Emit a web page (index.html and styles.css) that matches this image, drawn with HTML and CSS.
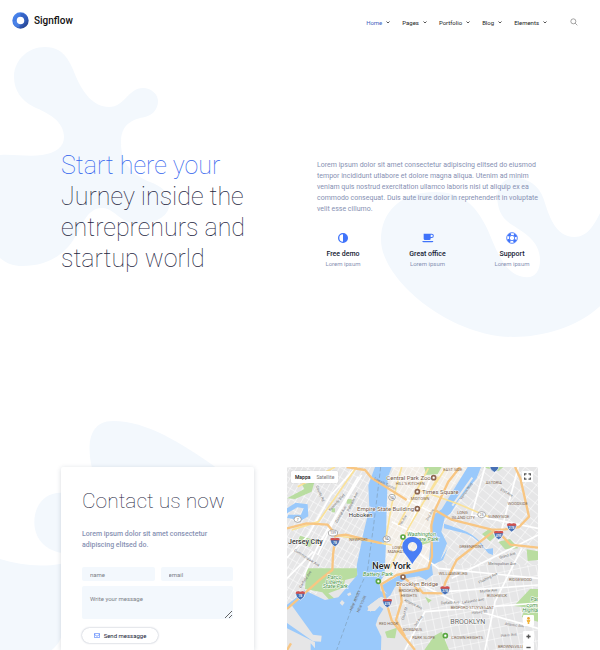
FILE: index.html
```html
<!DOCTYPE html>
<html lang="en">
<head>
<meta charset="utf-8">
<meta name="viewport" content="width=device-width, initial-scale=1">
<title>Signflow</title>
<link rel="stylesheet" href="styles.css">
</head>
<body>
<header class="header">
  <a class="brand" href="#">
    <svg class="brand-mark" viewBox="0 0 54 54" aria-hidden="true">
      <defs><linearGradient id="ring" x1="0" y1="0" x2="1" y2="1"><stop offset="0" stop-color="#4a86ee"/><stop offset=".5" stop-color="#3c70d8"/><stop offset="1" stop-color="#24418c"/></linearGradient></defs>
      <circle cx="27" cy="27" r="19" fill="none" stroke="url(#ring)" stroke-width="14"/>
      <path d="M27 3a24 24 0 0 1 23 18L39 26A12 12 0 0 0 27 15Z" fill="#3159b5" opacity=".6"/>
      <path d="M4 30a23 23 0 0 0 19 20l2-11a12 12 0 0 1-10-11Z" fill="#5b97f8" opacity=".45"/>
    </svg>
    Signflow
  </a>
  <nav class="nav">
    <a class="nav-link active" href="#">Home <svg class="chevron" viewBox="0 0 8 6"><path d="M1 1l3 3 3-3"/></svg></a>
    <a class="nav-link" href="#">Pages <svg class="chevron" viewBox="0 0 8 6"><path d="M1 1l3 3 3-3"/></svg></a>
    <a class="nav-link" href="#">Portfolio <svg class="chevron" viewBox="0 0 8 6"><path d="M1 1l3 3 3-3"/></svg></a>
    <a class="nav-link" href="#">Blog <svg class="chevron" viewBox="0 0 8 6"><path d="M1 1l3 3 3-3"/></svg></a>
    <a class="nav-link" href="#">Elements <svg class="chevron" viewBox="0 0 8 6"><path d="M1 1l3 3 3-3"/></svg></a>
    <button class="search" type="button" aria-label="Search"><svg viewBox="0 0 24 24"><circle cx="10" cy="10" r="7.500"/><path d="M15.500 15.500L22 22"/></svg></button>
  </nav>
</header>

<main>
  <section class="hero">
    <svg class="blob blob-left" viewBox="0 40 180 230" aria-hidden="true"><path d="M45 47C28 47 14 60 14 77C14 91 22 101 34 107C48 113 64 121 64 137C64 147 56 153 42 155C28 157 14 154 0 155V258C7 264 14 266 22 266C40 266 55 261 68 247C81 233 84 207 103 208C116 209 121 225 140 224C158 223 170 214 169 204C169 192 161 186 150 182C133 175 120 164 121 140C122 123 134 119 145 117C153 115 158 109 158 101C158 94 151 88 143 88C128 88 125 107 109 107C93 107 83 92 77 79C71 65 66 47 45 47Z"/></svg>
    <svg class="blob blob-right" viewBox="240 100 660 500" aria-hidden="true"><path d="M405 157C482 157 525 190 563 270C588 326 614 413 681 413C707 413 720 392 720 362C720 300 665 275 632 253C600 231 591 200 592 168C594 135 614 115 645 115C682 115 717 136 731 178C746 224 764 292 824 292C862 292 884 254 900 220V500C830 564 730 592 640 592C450 592 243 420 243 300C243 215 304 157 405 157Z"/></svg>
    <h1 class="hero-title"><span class="accent">Start here your</span> Jurney inside the entreprenurs and startup world</h1>
    <div class="hero-body">
      <p class="text">Lorem ipsum dolor sit amet consectetur adipiscing elitsed do eiusmod tempor incididunt utlabore et dolore magna aliqua. Utenim ad minim veniam quis nostrud exercitation ullamco laboris nisi ut aliquip ex ea commodo consequat. Duis aute irure dolor in reprehenderit in voluptate velit esse cillumo.</p>
      <ul class="features">
        <li class="feature">
          <svg class="feature-icon" viewBox="0 0 36 36"><circle cx="18" cy="18" r="13" fill="none" stroke="#3f73fa" stroke-width="4"/><path d="M18 5a13 13 0 0 1 0 26Z" fill="#3f73fa"/></svg>
          <h2 class="feature-title">Free demo</h2><p class="feature-note">Lorem ipsum</p>
        </li>
        <li class="feature">
          <svg class="feature-icon" viewBox="0 0 36 36"><path fill="#3f73fa" fill-rule="evenodd" d="M5 5H29a6 6 0 0 1 0 13H26v2a4 4 0 0 1-4 4H9a4 4 0 0 1-4-4ZM26 8v7h3a3 3 0 0 0 0-7ZM1 27H34q0 4-4 4H5q-4 0-4-4Z"/></svg>
          <h2 class="feature-title">Great office</h2><p class="feature-note">Lorem ipsum</p>
        </li>
        <li class="feature">
          <svg class="feature-icon" viewBox="0 0 36 36"><g fill="none" stroke="#3f73fa"><circle cx="18" cy="18" r="16" stroke-width="2.500"/><circle cx="18" cy="18" r="8" stroke-width="2.500"/><circle cx="18" cy="18" r="12" stroke-width="7" stroke-dasharray="9.400 9.450" stroke-dashoffset="-4.700"/></g></svg>
          <h2 class="feature-title">Support</h2><p class="feature-note">Lorem ipsum</p>
        </li>
      </ul>
    </div>
  </section>

  <section class="contact">
    <svg class="blob blob-contact" viewBox="0 30 660 690" aria-hidden="true"><path d="M275 170C263 115 260 33 340 33C440 33 545 100 645 170V250H290ZM185 248C140 246 103 280 103 337C103 385 137 428 200 430V250ZM0 447C60 465 120 473 185 461V675Q180 700 155 720H0Z"/></svg>
    <form class="card">
      <h2 class="card-title">Contact us now</h2>
      <p class="text card-text">Lorem ipsum dolor sit amet consectetur adipiscing elitsed do.</p>
      <div class="fields">
        <input class="field" type="text" placeholder="name" aria-label="name">
        <input class="field" type="email" placeholder="email" aria-label="email">
        <textarea class="field message" placeholder="Write your message" aria-label="Write your message"></textarea>
      </div>
      <button class="send" type="button"><svg viewBox="0 0 18 15"><rect x="1" y="1" width="16" height="13" rx="1"/><path d="M1 4l8 6 8-6"/></svg>Send messagge</button>
    </form>

    <div class="map">
      <svg class="map-canvas" viewBox="6 6 753 549" preserveAspectRatio="xMidYMin slice" role="img" aria-label="Map of New York">
        <defs>
          <pattern id="grid-a" width="16" height="26" patternUnits="userSpaceOnUse" patternTransform="rotate(30)"><path d="M0 0H16M0 0V26" stroke="#fff" stroke-width="3" fill="none"/></pattern>
          <pattern id="grid-b" width="24" height="32" patternUnits="userSpaceOnUse" patternTransform="rotate(-12)"><path d="M0 0H24M0 0V32" stroke="#fff" stroke-width="3" fill="none"/></pattern>
          <pattern id="grid-c" width="30" height="22" patternUnits="userSpaceOnUse" patternTransform="rotate(38)"><path d="M0 0H30M0 0V22" stroke="#fff" stroke-width="3" fill="none"/></pattern>
          <g id="shield"><path d="M-13-11Q-6-14 0-11Q6-14 13-11Q17 5 0 14Q-17 5-13-11Z" fill="#4670b5" stroke="#fff" stroke-width="2"/><path d="M-13-11Q-6-13 0-11Q6-13 13-11L14-5H-14Z" fill="#d5504b"/></g>
        </defs>
        <path fill="#e6e6e7" d="M0 0H770V560H0Z"/>
        <path fill="url(#grid-a)" d="M0 0H262L220 315L0 440Z"/>
        <path fill="#f3eee7" d="M325 0H560L450 130L435 300L290 355L302 130Z"/>
        <path fill="url(#grid-a)" d="M315 0H560L450 130L435 300L290 355L302 130Z"/>
        <path fill="url(#grid-c)" d="M555 0H770V300H440L480 160Z"/>
        <path fill="url(#grid-b)" d="M440 300H770V560H380L290 400Z"/>
        <g fill="#b9dda0">
          <path d="M417 6H470L458 27L424 30ZM593 6H655L641 18L605 10ZM6 100L58 72L50 58L88 52L80 80L30 102ZM45 212L88 225L74 246L38 230ZM65 310H217L216 336L180 345L175 368L130 385L150 402L134 406L112 382L60 372ZM591 207L615 190L630 215L615 229ZM640 230L675 222L700 250L660 253ZM725 253L759 259V285L728 288ZM687 423L735 372H759V470L710 456L722 427ZM448 512L470 500L492 555H418ZM300 500L336 488L330 520L306 518ZM420 395L440 406L430 414Z"/>
          <path d="M140 130h10v12h-10ZM185 102h15v14h-15ZM395 228L455 204L466 223L410 240Z"/>
        </g>
        <g fill="#9ac9fb">
          <path d="M270 6H320L308 40L305 130L303 235L299 330L283 352L287 378L315 391L304 402L288 395L254 420L247 438L270 438L284 423L295 432L279 458L272 480L289 515L288 555H77V535L90 550V532L6 490V419L36 396L58 376L120 405L160 397L217 330L215 302L234 210L253 130L250 60Z"/>
          <path d="M287 363L350 326L430 312L444 150L470 133L548 6H588L575 40L519 108L497 145L479 158L469 200L486 235L466 285L488 250L474 285L440 301L444 329L423 345L402 334L366 339L330 365L315 393L304 385Z"/>
          <path d="M477 176Q500 183 533 195Q565 207 588 234L601 253L624 250V270L610 265L592 244Q566 207 520 200L477 190Z"/>
          <path d="M6 130L32 113L68 118L70 154L50 166L6 159L10 149H48L56 130L37 127L6 145Z"/>
        </g>
        <path fill="#e6e6e7" d="M20 421L84 509L110 512L108 530L84 529L6 474V430ZM247 425L282 399L292 412L256 440ZM171 405l8 8-7 9-8-8ZM186 387l10-5 3 7-9 4Z"/>
        <path d="M502 122L562 38" stroke="#ecebea" stroke-width="6" fill="none"/>
        <path d="M287 6L266 180L247 320L215 388L155 555" fill="none" stroke="#7f9fba" stroke-width="2" stroke-dasharray="13 7"/>
        <g fill="none" stroke="#fff" stroke-width="5">
          <path d="M6 278L70 210L138 90L210 10M55 335L100 240L220 35M6 340L85 260M98 270L150 160L230 30M345 250L440 30M320 170L430 225M320 80L440 142M402 265L460 310L759 340M390 350L550 430L759 490M360 555L420 440L759 414M480 380L759 360M500 340L759 210M600 6L560 150L759 190M640 230L700 6M710 250L630 410L600 555"/>
        </g>
        <g fill="none" stroke="#fae29a" stroke-width="5">
          <path d="M20 195L100 170L215 6M38 65L150 6M165 213L320 240M402 75L520 117L610 155M299 240L320 120L350 6M340 180L430 10M315 310L370 190L460 35M410 120L480 12"/>
        </g>
        <g fill="none" stroke="#f8c683" stroke-width="7" stroke-linejoin="round">
          <path d="M6 190L65 175L128 179L152 209L144 270L142 315L105 344L6 432M152 213L182 209L290 235M185 6L240 15L260 39L365 105M285 360L335 330L430 310L441 274L439 180L450 135L500 164L620 194L660 193L702 186L732 155L706 40L690 6M450 135L490 50L525 6M289 360L320 466L349 504L390 555M402 370L414 384L470 385L482 350L515 285L605 215L630 196M360 340L405 380M640 200L676 239L759 248M343 350L350 410L333 465L360 515"/>
          <path d="M6 555L18 535"/>
        </g>
        <g class="label-area"><text x="475" y="17">EAST SIDE</text><text x="332" y="61">HILL’S KITCHEN</text><text x="377" y="105">MIDTOWN</text><text x="602" y="57">ASTORIA</text><text x="668" y="121">WOODSIDE</text><text x="517" y="148">LONG</text><text x="500" y="161">ISLAND CITY</text><text x="609" y="159">SUNNYSIDE</text><text x="193" y="228">NEWPORT</text><text x="322" y="251">LOWER</text><text x="308" y="264">MANHATTAN</text><text x="523" y="249">GREENPOINT</text><text x="461" y="330">WILLIAMSBURG</text><text x="672" y="348">RIDGEWOOD</text><text x="341" y="382">BROOKLYN</text><text x="347" y="395">HEIGHTS</text><text x="606" y="396">BUSHWICK</text><text x="497" y="431">BEDFORD-STUYVESANT</text><text x="282" y="479">RED HOOK</text><text x="353" y="497">GOWANUS</text><text x="382" y="523">PARK SLOPE</text><text x="499" y="523">CROWN HEIGHTS</text><text x="639" y="548">BROWNSVILLE</text></g>
        <g class="label-road"><text transform="translate(267 43) rotate(27)">Lincoln Tunnel</text><text transform="translate(92 64) rotate(66)">County Rd</text><text transform="translate(136 139) rotate(-48)">Kennedy Blvd</text><text transform="translate(157 174) rotate(-60)">Central Ave</text><text transform="translate(192 140) rotate(-64)">Palisade Ave</text><text transform="translate(348 184) rotate(-60)">7th Ave</text><text transform="translate(428 168) rotate(-60)">2nd Ave</text><text transform="translate(530 105) rotate(-55)">Vernon Blvd</text><text transform="translate(644 75) rotate(29)">31st Ave</text><text transform="translate(644 281) rotate(-15)">Grand Ave</text><text transform="translate(610 301)">Metropolitan Ave</text><text transform="translate(583 356) rotate(-27)">Flushing Ave</text><text transform="translate(585 383) rotate(-5)">Myrtle Ave</text><text transform="translate(468 418) rotate(-3)">DeKalb Ave</text><text transform="translate(532 416) rotate(-9)">Lafayette Ave</text><text transform="translate(560 447) rotate(-6)">Halsey St</text><text transform="translate(659 480) rotate(7)">Atlantic Ave</text><text transform="translate(357 408) rotate(26)">Atlantic Ave</text><text transform="translate(356 466) rotate(-73)">Court St</text><text transform="translate(393 485) rotate(-55)">3rd Ave</text><text transform="translate(26 258) rotate(32)">Communipaw Ave</text><text transform="translate(48 370) rotate(-57)">Garfield Ave</text><text transform="translate(201 437) rotate(-66)">NEW JERSEY</text><text transform="translate(222 443) rotate(-66)">NEW YORK</text><text transform="translate(648 517) rotate(-7)">Pitkin Ave</text></g>
        <g class="label-poi"><text x="304" y="44">Central Park Zoo</text><text x="411" y="86">Times Square</text><text x="216" y="137">Empire State Building</text><text x="334" y="362">Brooklyn Bridge</text></g>
        <g class="label-park"><text x="366" y="213">Washington</text><text x="372" y="229">Square Park</text><text x="234" y="334">Battery Park</text><text x="127" y="341">Parco</text><text x="122" y="356">Liberty</text><text x="113" y="370">State Park</text><text x="737" y="407">Parco</text><text x="724" y="425">comm.</text><text x="712" y="441">Highland</text></g>
        <g class="label-town"><text x="191" y="157">Hoboken</text><text x="496" y="476" class="borough">BROOKLYN</text><text x="9" y="236" class="city">Jersey City</text><text x="262" y="311" class="metro">New York</text></g>
        <g fill="#fff" stroke="#8d6651" stroke-width="5"><circle cx="446" cy="38" r="6"/><circle cx="397" cy="80" r="6"/><circle cx="397" cy="131" r="6"/><circle cx="354" cy="336" r="6"/></g>
        <g fill="#fff" stroke="#5aa742" stroke-width="5"><circle cx="354" cy="216" r="6"/><circle cx="280" cy="349" r="6"/><circle cx="481" cy="512" r="6"/></g>
        <g class="route"><ellipse cx="321" cy="97" rx="10" ry="9"/><ellipse cx="305" cy="222" rx="11" ry="9"/><ellipse cx="38" cy="163" rx="11" ry="9"/><ellipse cx="144" cy="204" rx="14" ry="9"/><ellipse cx="590" cy="149" rx="12" ry="9"/><text x="321" y="101">9A</text><text x="305" y="226">9A</text><text x="38" y="167">7</text><text x="144" y="208">139</text><text x="590" y="153">25</text></g>
        <use href="#shield" x="150" y="231"/><use href="#shield" x="46" y="391"/><use href="#shield" x="307" y="414"/><use href="#shield" x="480" y="376"/><use href="#shield" x="641" y="210"/><use href="#shield" x="680" y="187"/><use href="#shield" x="628" y="8"/>
        <g class="shield-text"><text x="150" y="236">78</text><text x="46" y="396">78</text><text x="307" y="419">478</text><text x="480" y="381">278</text><text x="641" y="215">495</text><text x="680" y="192">278</text></g>
        <path fill="#4a7ef5" fill-rule="evenodd" d="M382 297C368 273 352 264 352 244A30 29 0 0 1 412 244C412 264 395 275 382 297ZM382 231a14 14 0 1 0 1 0Z"/>
      </svg>
      <div class="map-types"><button class="map-type selected" type="button">Mappa</button><button class="map-type" type="button">Satellite</button></div>
      <button class="map-button fullscreen" type="button" aria-label="Fullscreen"><svg viewBox="0 0 22 20"><path d="M2 7V2H8M14 2H20V7M20 13V18H14M8 18H2V13" fill="none" stroke="#555" stroke-width="4"/></svg></button>
      <div class="map-tools">
        <button class="map-button" type="button" aria-label="Street view"><svg viewBox="0 0 22 26"><circle cx="11" cy="5" r="5" fill="#e8a32d"/><path d="M4 10H18L16 19H14V26H8V19H6Z" fill="#f3b53c"/></svg></button>
        <div class="zoom"><button class="map-button" type="button" aria-label="Zoom in"><svg viewBox="0 0 20 20"><path d="M4 10H16M10 4V16" stroke="#555" stroke-width="4"/></svg></button><button class="map-button" type="button" aria-label="Zoom out"><svg viewBox="0 0 20 20"><path d="M4 10H16" stroke="#555" stroke-width="4"/></svg></button></div>
      </div>
    </div>
  </section>
</main>
</body>
</html>
```
FILE: styles.css
```css
* { box-sizing: border-box; }
body { margin: 0; background: #fff; color: #151b33; font-family: Roboto, "Liberation Sans", sans-serif; font-size: 7px; }
h1, h2, p, ul { margin: 0; padding: 0; }
button { border: 0; padding: 0; background: none; font: inherit; color: inherit; cursor: pointer; }
a { color: inherit; text-decoration: none; }
svg { display: block; }

.header { display: flex; align-items: center; justify-content: space-between; height: 40px; padding: 0 22px 0 12px; position: relative; z-index: 1; }
.brand { display: flex; align-items: center; gap: 5px; font-size: 10px; font-weight: 500; color: #111; }
.brand-mark { width: 17px; height: 17px; }
.nav { display: flex; align-items: center; gap: 12px; padding-top: 4px; font-size: 6px; color: #222; }
.nav-link { display: flex; align-items: center; gap: 4px; }
.active { color: #3f5fc0; }
.chevron { width: 4px; height: 3px; fill: none; stroke: #555; stroke-width: 2; }
.search { margin-left: 11px; }
.search svg { width: 8px; height: 8px; fill: none; stroke: #777; stroke-width: 2; }

.blob { position: absolute; z-index: -1; fill: #f3f8fd; }
.blob-left { left: 0; top: 0; width: 180px; }
.blob-right { right: 0; top: 133px; width: 220px; }
.blob-contact { left: 0; top: 0; width: 220px; }

.hero { position: relative; display: grid; grid-template-columns: 193fr 221fr; gap: 63px; align-items: start; min-height: 380px; padding: 110px 62px 0 61px; }
.hero-title { font-size: 25px; line-height: 31px; font-weight: 100; color: #1d2440; }
.accent { display: block; color: #3264ee; }
.hero-body { padding-top: 10px; }
.text { color: #8791b3; font-size: 7px; line-height: 11px; }
.features { display: grid; grid-template-columns: repeat(3, 52px); justify-content: space-between; list-style: none; padding-top: 17px; }
.feature { text-align: center; white-space: nowrap; }
.feature-icon { width: 12px; height: 12px; margin: 0 auto 6px; }
.feature-title { font-size: 7px; line-height: 9px; font-weight: 500; }
.feature-note { font-size: 6px; line-height: 10px; color: #8791b3; }

.contact { position: relative; display: grid; grid-template-columns: 193fr 251fr; gap: 33px; min-height: 230px; padding: 47px 62px 0 61px; overflow: hidden; }
.card { padding: 20px 21px 7px; background: #fff; border-radius: 2px 2px 0 0; box-shadow: 0 1px 5px rgba(30, 50, 80, .18); }
.card-title { font-size: 21px; line-height: 28px; font-weight: 100; color: #1d2440; }
.card-text { padding-top: 14px; font-weight: 500; }
.fields { display: grid; grid-template-columns: 1fr 1fr; gap: 5px 6px; padding: 16px 0 9px; }
.field { width: 100%; min-width: 0; height: 14px; padding: 0 8px; border: 0; border-radius: 2px; background: #f3f8fd; font: inherit; font-size: 6px; color: #333; }
.field::placeholder { color: #7c8086; opacity: 1; }
.message { grid-column: 1 / -1; height: 33px; padding-top: 9px; display: block; }
.send { display: flex; align-items: center; justify-content: center; gap: 4px; width: 76px; height: 15px; border-radius: 8px; background: #fff; box-shadow: 0 0 2px rgba(20, 40, 80, .4); font-size: 6px; }
.send svg { width: 6px; height: 5px; fill: none; stroke: #3f73fa; stroke-width: 2; }

.map { position: relative; overflow: hidden; border-radius: 2px 2px 0 0; background: #e6e6e7; }
.map-canvas { position: absolute; inset: 0; width: 100%; height: 100%; }
.map-types { position: absolute; left: 4px; top: 4px; display: flex; gap: 6px; height: 12px; padding: 0 4px; background: #fff; border-radius: 1px; box-shadow: 0 0 1px rgba(0, 0, 0, .3); font-size: 5px; color: #777; }
.selected { color: #111; font-weight: 500; }
.map-button { display: grid; place-items: center; width: 11px; height: 11px; background: #fff; border-radius: 1px; }
.map-button svg { width: 7px; height: 7px; }
.fullscreen { position: absolute; right: 5px; top: 4px; }
.map-tools { position: absolute; right: 4px; top: 148px; display: grid; gap: 5px; }
.zoom { display: grid; }

.label-area { font-size: 12px; fill: #7f6650; }
.label-road { font-size: 11px; fill: #777; }
.label-poi { font-size: 18px; fill: #745847; }
.label-park { font-size: 17px; font-style: italic; fill: #3f9144; }
.label-town { font-size: 18px; fill: #333; }
.label-poi, .label-park, .label-town { stroke: #fff; stroke-width: 3px; paint-order: stroke; }
.borough { font-size: 21px; fill: #666; }
.city { font-size: 21px; font-weight: 500; }
.metro { font-size: 27px; font-weight: 500; fill: #222; }
.route { fill: #fff; stroke: #888; stroke-width: 2; }
.route text { font-size: 10px; fill: #666; stroke: none; text-anchor: middle; }
.shield-text { font-size: 10px; font-weight: 500; fill: #fff; text-anchor: middle; }
```
